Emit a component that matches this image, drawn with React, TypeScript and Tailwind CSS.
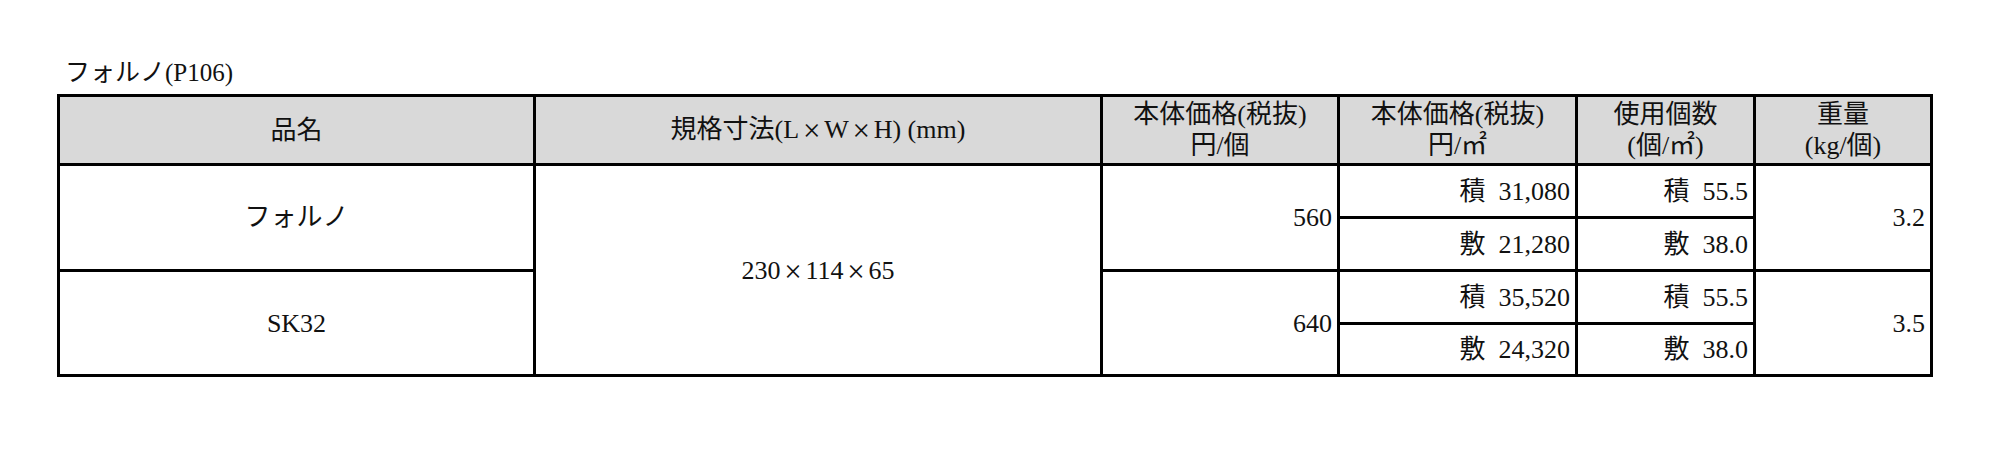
const FONT = "font-['Liberation_Serif','Noto_Sans_CJK_JP',serif]";

type Row = {
  name: string;
  unit: string;
  items: { area: string; count: string }[];
  weight: string;
};

const ROWS: Row[] = [
  {
    name: 'フォルノ',
    unit: '560',
    items: [
      { area: '積\u200231,080', count: '積\u200255.5' },
      { area: '敷\u200221,280', count: '敷\u200238.0' },
    ],
    weight: '3.2',
  },
  {
    name: 'SK32',
    unit: '640',
    items: [
      { area: '積\u200235,520', count: '積\u200255.5' },
      { area: '敷\u200224,320', count: '敷\u200238.0' },
    ],
    weight: '3.5',
  },
];

const cell = 'border-[3px] border-black p-0';
const head = `${cell} bg-[#d9d9d9] text-center align-middle leading-[31px] font-normal`;
const num = `${cell} text-right align-middle pr-[5px]`;

// Mincho-style full-width multiplication sign
function Times() {
  return <span className="inline-block w-[25px] text-center text-[31px] leading-none align-[-3px]">×</span>;
}

export default function App() {
  return (
    <div className={`min-h-[464px] bg-white pt-[57px] pl-[57px] text-[26px] text-[#111] ${FONT}`}>
      {/* Title */}
      <p className="pl-[8px] leading-[31px] mb-[6px] text-[25px]">フォルノ(P106)</p>

      {/* Spec table */}
      <table className="table-fixed border-collapse w-[1876px]">
        <colgroup>
          <col className="w-[476px]" />
          <col className="w-[567px]" />
          <col className="w-[237px]" />
          <col className="w-[238px]" />
          <col className="w-[178px]" />
          <col className="w-[177px]" />
        </colgroup>
        <thead>
          <tr className="h-[69px]">
            <th className={head}>品名</th>
            <th className={head}>
              規格寸法(L<Times />W<Times />H) (mm)
            </th>
            <th className={head}>
              本体価格(税抜)
              <br />
              円/個
            </th>
            <th className={head}>
              本体価格(税抜)
              <br />
              円/㎡
            </th>
            <th className={head}>
              使用個数
              <br />
              (個/㎡)
            </th>
            <th className={head}>
              重量
              <br />
              (kg/個)
            </th>
          </tr>
        </thead>
        <tbody>
          {ROWS.map((row, ri) =>
            row.items.map((item, ii) => (
              <tr key={`${row.name}-${ii}`} className={ri === 1 && ii === 1 ? 'h-[52px]' : 'h-[53px]'}>
                {ii === 0 && (
                  <td rowSpan={2} className={`${cell} text-center align-middle`}>
                    {row.name}
                  </td>
                )}
                {ri === 0 && ii === 0 && (
                  <td rowSpan={4} className={`${cell} text-center align-middle`}>
                    230<Times />114<Times />65
                  </td>
                )}
                {ii === 0 && (
                  <td rowSpan={2} className={num}>
                    {row.unit}
                  </td>
                )}
                <td className={num}>{item.area}</td>
                <td className={num}>{item.count}</td>
                {ii === 0 && (
                  <td rowSpan={2} className={num}>
                    {row.weight}
                  </td>
                )}
              </tr>
            ))
          )}
        </tbody>
      </table>
    </div>
  );
}
